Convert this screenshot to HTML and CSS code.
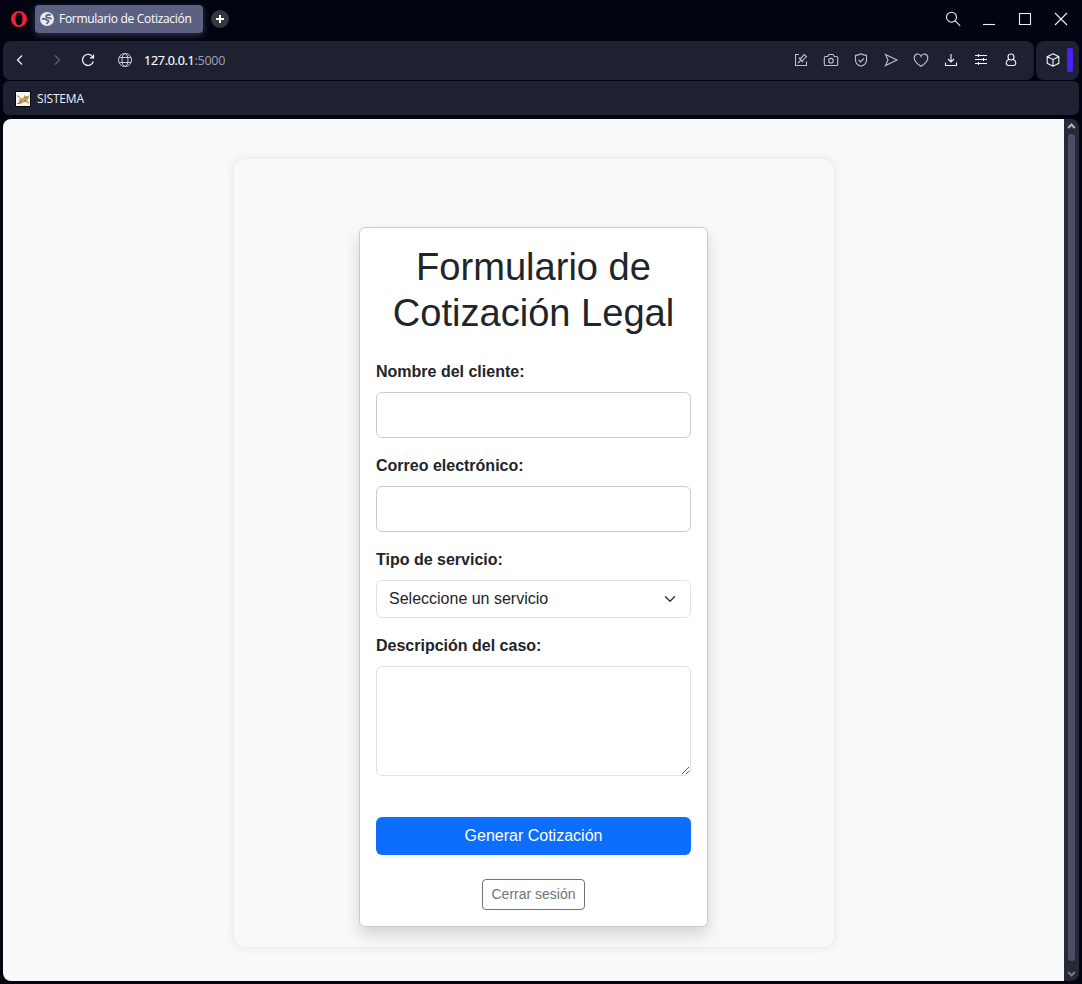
FILE: index.html
```html
<!DOCTYPE html>
<html lang="es">
<head>
<meta charset="utf-8">
<title>Formulario de Cotización</title>
<link rel="stylesheet" href="styles.css">
</head>
<body>
<div class="browser">
  <header class="tabs">
    <svg class="opera" width="18" height="18" viewBox="0 0 18 18"><path fill="#f0203a" fill-rule="evenodd" d="M9 1a8 8 0 1 0 0 16A8 8 0 1 0 9 1zM9 2.800c2.300 0 3.500 2.600 3.500 6.200s-1.200 6.200-3.500 6.200S5.500 12.600 5.500 9 6.700 2.800 9 2.800z"/></svg>
    <div class="tab">
      <svg width="14" height="14" viewBox="0 0 14 14"><circle cx="7" cy="7" r="7" fill="#e9ebf5"/><path fill="none" stroke="#5c6182" stroke-width="1.700" stroke-linejoin="round" d="M10.800 3.200L8 2.600 6 4l.8 1.600 3 .4 1.700 1M1.800 7l2.700-.3L6.800 8l1.700.6-.3 1.600-1.700 1.600"/></svg>
      <span class="tab-title">Formulario de Cotización</span>
    </div>
    <div class="new-tab"><svg width="18" height="18" viewBox="0 0 18 18"><path d="M9 5v8M5 9h8" stroke="#fff" stroke-width="2"/></svg></div>
    <div class="window-buttons">
      <svg viewBox="0 0 16 16"><circle cx="6.500" cy="6.200" r="5"/><path d="M10.200 9.900l5 5"/></svg>
      <svg viewBox="0 0 16 16"><path d="M2 13.500h12"/></svg>
      <svg viewBox="0 0 16 16"><path d="M2.500 2.500h11v11h-11z"/></svg>
      <svg viewBox="0 0 16 16"><path d="M2 2l12 12M14 2L2 14"/></svg>
    </div>
  </header>

  <div class="toolbar">
    <div class="address">
      <svg class="nav" viewBox="0 0 16 16"><path d="M10 3.500L5.500 8l4.500 4.500"/></svg>
      <svg class="nav forward" viewBox="0 0 16 16"><path d="M6 3.500L10.500 8 6 12.500"/></svg>
      <svg class="nav reload" viewBox="0 0 16 16"><path d="M12.800 5.200A5.500 5.500 0 1 0 13.300 9.500M13.500 2.500v3.300H10"/></svg>
      <svg class="nav globe" viewBox="0 0 16 16"><circle cx="8" cy="8" r="6.500"/><ellipse cx="8" cy="8" rx="3" ry="6.500"/><path d="M2.200 5.500h11.600M2.200 10.500h11.600"/></svg>
      <span class="url"><b>127.0.0.1</b>:5000</span>
      <div class="actions">
        <svg viewBox="0 0 16 16"><path d="M6 2.500H2.500v11h11V9.500M5 11l3-3M6.300 6.400l3.300 3.300.5-2 3.400-2.900-2.300-2.300-2.900 3.400z"/></svg>
        <svg viewBox="0 0 16 16"><path d="M2.500 4.500h2.200L6 2.500h4l1.300 2h2.200a1.200 1.200 0 0 1 1.200 1.200v6.600a1.200 1.200 0 0 1-1.200 1.200h-11a1.200 1.200 0 0 1-1.200-1.200V5.700a1.200 1.200 0 0 1 1.200-1.200z"/><circle cx="8" cy="8.700" r="2.300"/></svg>
        <svg viewBox="0 0 16 16"><path d="M8 1.800c1.700 1 3.500 1.500 5.500 1.600V8c0 3.300-2 5.300-5.500 6.300C4.500 13.300 2.500 11.300 2.500 8V3.400C4.500 3.300 6.300 2.800 8 1.800zM5.500 8l2 1.900 3.300-3.400"/></svg>
        <svg viewBox="0 0 16 16"><path d="M2.500 2.500L14 8 2.500 13.500 5 8z"/></svg>
        <svg viewBox="0 0 16 16"><path d="M8 14.300C4.500 12 1.200 9.300 1.200 5.900c0-4.300 5.300-5.300 6.800-1.500 1.500-3.800 6.800-2.800 6.800 1.500 0 3.400-3.300 6.100-6.800 8.400z"/></svg>
        <svg class="bright" viewBox="0 0 16 16"><path d="M8 2v7.500M5 7l3 3 3-3M2.500 10.500v3h11v-3"/></svg>
        <svg class="bright" viewBox="0 0 16 16"><path d="M2 3.500h12M2 7.500h12M2 11.500h12M5.500 2v3M10.500 6v3M5.500 10v3"/></svg>
        <svg class="bright" viewBox="0 0 16 16"><circle cx="8" cy="5" r="3"/><path d="M5.800 7.200C4.300 8 3.200 9.300 3.200 11c0 1.600 1 2.500 2.400 2.500h4.800c1.400 0 2.400-.9 2.400-2.500 0-1.700-1.100-3-2.600-3.800"/></svg>
      </div>
    </div>
    <div class="side">
      <svg viewBox="0 0 16 16"><path d="M8 1.800l5.800 2.900v6.600L8 14.200l-5.800-2.900V4.700zM2.200 4.700L8 7.500l5.800-2.800M8 7.500V14"/></svg>
      <span class="marker"></span>
    </div>
  </div>

  <div class="bookmarks">
    <svg width="16" height="16" viewBox="0 0 16 16"><path fill="#f8f7f2" stroke="#000" d="M.5.5h15v15H.5z"/><path fill="#c0a45c" d="M4 9l2-2 3-.5V4l1.500 1h2L14 4v3.500L12 9l2 2.500V13l-3-2-3 .5L6 13H2l2-1.500z"/><path d="M2 4.500l2 1.200 1 1.800M2 12.800l3-1.300 2-1.500M9 9.500l2 .5M10 6.500h2" stroke="#6f6653" fill="none" stroke-width=".8"/></svg>
    <span>SISTEMA</span>
  </div>

  <div class="viewport">
    <main class="page">
      <section class="panel">
        <form class="card">
          <h1>Formulario de Cotización Legal</h1>
          <label for="nombre">Nombre del cliente:</label>
          <input class="field" id="nombre" type="text">
          <label for="correo">Correo electrónico:</label>
          <input class="field" id="correo" type="email">
          <label>Tipo de servicio:</label>
          <div class="select">
            <span>Seleccione un servicio</span>
            <svg width="16" height="12" viewBox="0 0 16 16"><path fill="none" stroke="#343a40" stroke-linecap="round" stroke-linejoin="round" stroke-width="2" d="m2 5 6 6 6-6"/></svg>
          </div>
          <label for="caso">Descripción del caso:</label>
          <textarea id="caso"></textarea>
          <button class="submit" type="button">Generar Cotización</button>
          <a class="logout">Cerrar sesión</a>
        </form>
      </section>
    </main>
    <div class="scrollbar">
      <svg width="9" height="7" viewBox="0 0 9 7"><path d="M1.200 5L4.500 1.500 7.800 5"/></svg>
      <div class="thumb"></div>
      <svg class="down" width="9" height="7" viewBox="0 0 9 7"><path d="M1.200 2L4.500 5.500 7.800 2"/></svg>
    </div>
  </div>
</div>
</body>
</html>
```
FILE: styles.css
```css
* { box-sizing: border-box; }

body {
  margin: 0;
  background: #020511;
  font-family: "Liberation Sans", Arial, sans-serif;
  font-size: 16px;
  line-height: 24px;
  color: #212529;
}

svg { flex: none; }

.browser {
  width: 1082px;
  height: 984px;
  padding: 0 3px 3px;
  display: flex;
  flex-direction: column;
  overflow: hidden;
  font-family: "Open Sans", "Noto Sans", sans-serif;
}

/* Tab strip */
.tabs {
  height: 41px;
  padding: 0 10px 3px 7px;
  display: flex;
  align-items: center;
}

.tab {
  width: 168px;
  height: 28px;
  margin-left: 7px;
  padding-left: 5px;
  display: flex;
  align-items: center;
  gap: 5px;
  border-radius: 4px;
  background: #5c6182;
  box-shadow: 0 2px 6px #34384f;
}

.tab-title {
  font-size: 12px;
  letter-spacing: -0.3px;
  white-space: nowrap;
  color: #fff;
}

.new-tab {
  width: 18px;
  height: 18px;
  margin-left: 8px;
  display: flex;
  border-radius: 50%;
  background: #35373f;
}

.window-buttons {
  margin-left: auto;
  display: flex;
  gap: 20px;
}

.window-buttons svg {
  width: 16px;
  height: 16px;
  fill: none;
  stroke: #eef0f8;
  stroke-width: 1.1;
}

/* Address bar */
.toolbar {
  height: 39px;
  display: flex;
  gap: 2px;
}

.address {
  flex: 1;
  padding: 0 15px 1px 9px;
  display: flex;
  align-items: center;
  border-radius: 8px;
  background: #1d2131;
}

.nav, .actions svg, .side svg {
  width: 16px;
  height: 16px;
  fill: none;
  stroke: #bfc2cd;
  stroke-width: 1.1;
}

.nav { stroke: #f1f2f7; stroke-width: 1.25; }
.forward { margin-left: 21px; stroke: #5d606d; }
.reload { margin-left: 15px; }
.globe { margin-left: 21px; stroke: #c9cbd4; stroke-width: 1; }

.url {
  margin-left: 11px;
  padding-top: 2px;
  font-size: 12.5px;
  letter-spacing: -0.25px;
  color: #a0a3ae;
}

.url b {
  font-weight: 400;
  color: #fff;
  -webkit-text-stroke: 0.2px #fff;
}

.actions {
  margin-left: auto;
  display: flex;
  gap: 14px;
}

.actions .bright, .side svg { stroke: #f1f2f7; }

.side {
  width: 43px;
  padding: 0 6px 1px 9px;
  display: flex;
  align-items: center;
  justify-content: space-between;
  border-radius: 8px;
  background: #1d2131;
}

.marker {
  width: 6px;
  height: 24px;
  border-radius: 2px;
  background: #4b20f5;
}

.bookmarks {
  height: 34px;
  margin-top: 1px;
  padding: 2px 0 0 12px;
  display: flex;
  align-items: center;
  gap: 6px;
  border-radius: 6px;
  background: #1d2131;
  font-size: 12px;
  letter-spacing: -0.2px;
  color: #eef0f5;
}

/* Web page */
.viewport {
  height: 862px;
  margin-top: 4px;
  display: flex;
  border-radius: 8px;
  overflow: hidden;
  font-family: "Liberation Sans", Arial, sans-serif;
}

.page {
  flex: 1;
  padding-top: 40px;
  background: #f8f9fb;
}

.panel {
  width: 600px;
  height: 788px;
  margin: 0 auto;
  padding-top: 68px;
  border-radius: 12px;
  background: #f8f9fb;
  box-shadow: 0 0 10px rgba(0, 0, 0, 0.1);
}

.card {
  width: 349px;
  height: 700px;
  margin: 0 auto;
  padding: 16px;
  display: flex;
  flex-direction: column;
  border: 1px solid #c9cbcd;
  border-radius: 6px;
  background: #fff;
  box-shadow: 0 8px 16px rgba(0, 0, 0, 0.15);
}

h1 {
  margin: 0 0 24px;
  font-size: 38.1px;
  font-weight: 400;
  line-height: 46px;
  text-align: center;
}

label {
  margin-bottom: 8px;
  font-weight: 700;
}

.field {
  width: 100%;
  height: 46px;
  margin-bottom: 16px;
  padding: 10px;
  border: 1px solid #ccc;
  border-radius: 6px;
  outline: none;
}

.select {
  height: 38px;
  margin-bottom: 16px;
  padding: 0 12px;
  display: flex;
  align-items: center;
  justify-content: space-between;
  border: 1px solid #dee2e6;
  border-radius: 6px;
}

textarea {
  height: 110px;
  margin-bottom: 41px;
  border: 1px solid #dee2e6;
  border-radius: 6px;
  resize: vertical;
}

.submit {
  height: 38px;
  margin-bottom: 24px;
  border: 0;
  border-radius: 6px;
  background: #0d6efd;
  font: inherit;
  color: #fff;
}

.logout {
  height: 31px;
  padding: 4px 8px;
  align-self: center;
  border: 1px solid #6c757d;
  border-radius: 4px;
  font-size: 14px;
  line-height: 21px;
  color: #6c757d;
}

.scrollbar {
  width: 15px;
  padding: 4px 0;
  display: flex;
  flex-direction: column;
  align-items: center;
  gap: 4px;
  background: #272a36;
}

.scrollbar svg {
  fill: none;
  stroke: #b4b5bb;
  stroke-width: 2;
}

.scrollbar .down { margin-top: 5px; stroke: #777982; }

.thumb {
  flex: 1;
  width: 7px;
  border-radius: 4px;
  background: #4b4e66;
}
```
